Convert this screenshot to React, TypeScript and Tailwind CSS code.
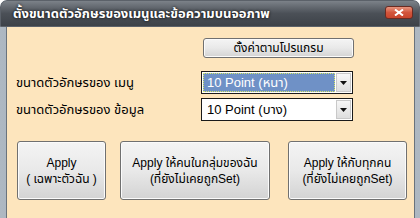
import React from "react";

const font = { fontFamily: '"Liberation Sans", Tahoma, "Noto Sans Thai", "Noto Sans", sans-serif' };

function Select({ value, selected }: { value: string; selected?: boolean }) {
  return (
    <div className="flex h-[23px] w-[152px] items-stretch border border-[#1a1a1a] bg-white p-[1px]">
      <div
        className={
          selected
            ? "flex flex-1 items-center border border-dotted border-[#d8e86a] bg-[#6f91c6] pl-[3px] text-[13px] text-white"
            : "flex flex-1 items-center pl-[4px] text-[13px] text-black"
        }
      >
        {value}
      </div>
      <div className="ml-[1px] flex w-[15px] items-center justify-center border border-[#c9c9c9] bg-gradient-to-b from-[#f7f7f7] to-[#dedede]">
        <svg width="7" height="4" viewBox="0 0 7 4">
          <path d="M0 0h7L3.5 4z" fill="#111" />
        </svg>
      </div>
    </div>
  );
}

function Btn({ children, className }: { children: React.ReactNode; className: string }) {
  return (
    <button
      type="button"
      className={
        "flex flex-col items-center justify-center rounded-[3px] border border-[#707070] bg-gradient-to-b from-[#f4f4f4] via-[#e9e9e9] to-[#d3d3d3] text-[12px] leading-[16px] text-black shadow-[inset_0_0_0_1px_#fbfbfb] " +
        className
      }
    >
      {children}
    </button>
  );
}

export default function App() {
  return (
    <div
      className="flex h-[218px] w-[420px] flex-col overflow-hidden rounded-t-[7px] bg-gradient-to-r from-[#aeb8c2] via-[#8e98a3] to-[#aeb8c2]"
      style={font}
    >
      <div className="flex h-[27px] shrink-0 items-center justify-between rounded-t-[7px] border border-[#5b6169] bg-gradient-to-b from-[#7c8289] via-[#4b5057] to-[#3d4248] pl-[12px] pr-[6px]">
        <span className="text-[13px] font-bold text-white [text-shadow:0_0_3px_#000]">
          ตั้งขนาดตัวอักษรของเมนูและข้อความบนจอภาพ
        </span>
        <div className="mb-[2px] flex h-[13px] w-[28px] items-center justify-center rounded-[3px] border border-[#6b2b22] bg-gradient-to-b from-[#e7947e] via-[#d2553c] to-[#c9452c]">
          <svg width="10" height="7" viewBox="0 0 10 7">
            <path d="M1 0.5l8 6M9 0.5l-8 6" stroke="#fff" strokeWidth="2" />
          </svg>
        </div>
      </div>
      <div className="ml-[6px] mr-[5px] flex flex-1 flex-col border-l border-r border-[#6a737c] bg-[#fde5bd] pt-[11px]">
        <div className="flex pl-[196px]">
          <Btn className="h-[20px] w-[151px]">ตั้งค่าตามโปรแกรม</Btn>
        </div>
        <div className="mt-[13px] flex items-center pl-[9px]">
          <span className="w-[185px] text-[13px] text-black">ขนาดตัวอักษรของ เมนู</span>
          <Select value="10 Point (หนา)" selected />
        </div>
        <div className="mt-[4px] flex items-center pl-[9px]">
          <span className="w-[185px] text-[13px] text-black">ขนาดตัวอักษรของ ข้อมูล</span>
          <Select value="10 Point (บาง)" />
        </div>
        <div className="mt-[20px] flex pl-[10px]">
          <Btn className="h-[59px] w-[89px]">
            <span>Apply</span>
            <span>( เฉพาะตัวฉัน )</span>
          </Btn>
          <Btn className="ml-[14px] h-[59px] w-[150px]">
            <span>Apply ให้คนในกลุ่มของฉัน</span>
            <span>(ที่ยังไม่เคยถูกSet)</span>
          </Btn>
          <Btn className="ml-[18px] h-[59px] w-[119px]">
            <span>Apply ให้กับทุกคน</span>
            <span>(ที่ยังไม่เคยถูกSet)</span>
          </Btn>
        </div>
      </div>
    </div>
  );
}
